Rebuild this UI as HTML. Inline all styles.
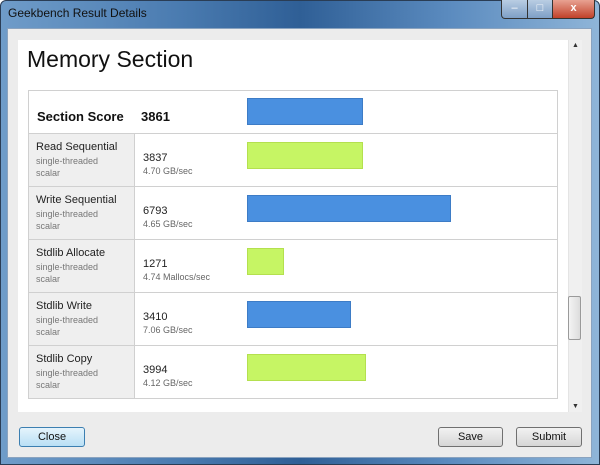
<!DOCTYPE html>
<html><head><style>
*{margin:0;padding:0;box-sizing:border-box}
body{width:600px;height:465px;overflow:hidden;font-family:"Liberation Sans",sans-serif;background:#fff}
.win{position:absolute;left:0;top:0;width:600px;height:465px;border-radius:6px 6px 0 0;background:linear-gradient(90deg,#6f9cc9 0%,#4a7bb0 30%,#2f5f96 50%,#5b8bbf 75%,#8fb5d8 100%);border:1px solid #2a3d55}
.title{position:absolute;left:8px;top:6px;font-size:12px;color:#111}
.client{position:absolute;left:7px;top:28px;width:585px;height:430px;background:#ececec;border:1px solid #8aa3bf}
.panel{position:absolute;left:18px;top:40px;width:550px;height:372px;background:#fff}
.sb{position:absolute;left:568px;top:40px;width:14px;height:372px;background:#f0f0f0;border-left:1px solid #e4e4e4}
.thumb{position:absolute;left:568px;top:296px;width:13px;height:44px;background:linear-gradient(90deg,#f4f4f4,#dcdcdc);border:1px solid #9a9a9a;border-radius:2px}
h1{position:absolute;left:27px;top:46px;font-size:23px;font-weight:normal;color:#111}
.tbl{position:absolute;left:28px;top:90px;width:530px;height:309px;border:1px solid #d0d0d0}
.row{position:absolute;left:0;width:528px;border-top:1px solid #d0d0d0;height:53px}
.lc{position:absolute;left:0;top:0;width:106px;height:52px;background:#efefef;border-right:1px solid #d0d0d0;padding:7px 0 0 7px}
.n{font-size:11px;color:#222;line-height:13px;margin-bottom:1px}
.s{font-size:9px;color:#777;line-height:12px}
.v{position:absolute;left:114px;top:18px;font-size:11px;color:#222}
.u{position:absolute;left:114px;top:32px;font-size:9px;color:#666}
.bar{position:absolute;left:218px;height:27px}
.b{background:#4a90e0;border:1px solid #3d7cc6}
.g{background:#c6f564;border:1px solid #b4e04f}
.btn{position:absolute;top:427px;height:20px;font-size:11px;text-align:center;line-height:18px;border:1px solid #707070;border-radius:3px;background:linear-gradient(#f2f2f2,#d6d6d6);color:#111}
.wb{position:absolute;top:0;height:19px;border:1px solid #333;border-top:none;color:#fff;font-size:11px;text-align:center;line-height:17px}
</style></head><body>
<div class="win"></div>
<div class="title">Geekbench Result Details</div>
<div class="wb" style="left:501px;width:27px;border-radius:0 0 0 4px;background:linear-gradient(#b9cde3,#7e9fc6)">–</div>
<div class="wb" style="left:527px;width:26px;background:linear-gradient(#b9cde3,#7e9fc6)">□</div>
<div class="wb" style="left:552px;width:43px;border-radius:0 0 4px 0;background:linear-gradient(#e8a292,#c1412a);font-weight:bold">x</div>
<div class="client"></div>
<div class="panel"></div>
<div class="sb"></div>
<div style="position:absolute;left:572px;top:42px;font-size:7px;color:#333">▲</div>
<div style="position:absolute;left:572px;top:403px;font-size:7px;color:#333">▼</div>
<div class="thumb"></div>
<h1>Memory Section</h1>
<div class="tbl">
<div style="position:absolute;left:8px;top:18px;font-size:13px;font-weight:bold;color:#111">Section Score</div>
<div style="position:absolute;left:112px;top:18px;font-size:13px;font-weight:bold;color:#111">3861</div>
<div class="bar b" style="top:7px;width:116px"></div>
<div class="row" style="top:42px"><div class="lc"><div class="n">Read Sequential</div><div class="s">single-threaded</div><div class="s">scalar</div></div><div class="v">3837</div><div class="u">4.70 GB/sec</div><div class="bar g" style="top:8px;width:116px"></div></div>
<div class="row" style="top:95px"><div class="lc"><div class="n">Write Sequential</div><div class="s">single-threaded</div><div class="s">scalar</div></div><div class="v">6793</div><div class="u">4.65 GB/sec</div><div class="bar b" style="top:8px;width:204px"></div></div>
<div class="row" style="top:148px"><div class="lc"><div class="n">Stdlib Allocate</div><div class="s">single-threaded</div><div class="s">scalar</div></div><div class="v">1271</div><div class="u">4.74 Mallocs/sec</div><div class="bar g" style="top:8px;width:37px"></div></div>
<div class="row" style="top:201px"><div class="lc"><div class="n">Stdlib Write</div><div class="s">single-threaded</div><div class="s">scalar</div></div><div class="v">3410</div><div class="u">7.06 GB/sec</div><div class="bar b" style="top:8px;width:104px"></div></div>
<div class="row" style="top:254px"><div class="lc"><div class="n">Stdlib Copy</div><div class="s">single-threaded</div><div class="s">scalar</div></div><div class="v">3994</div><div class="u">4.12 GB/sec</div><div class="bar g" style="top:8px;width:119px"></div></div>
</div>
<div class="btn" style="left:19px;width:66px;border-color:#3c7fb1;background:linear-gradient(#e5f4fc,#b9dff5)">Close</div>
<div class="btn" style="left:438px;width:65px">Save</div>
<div class="btn" style="left:516px;width:66px">Submit</div>
</body></html>
